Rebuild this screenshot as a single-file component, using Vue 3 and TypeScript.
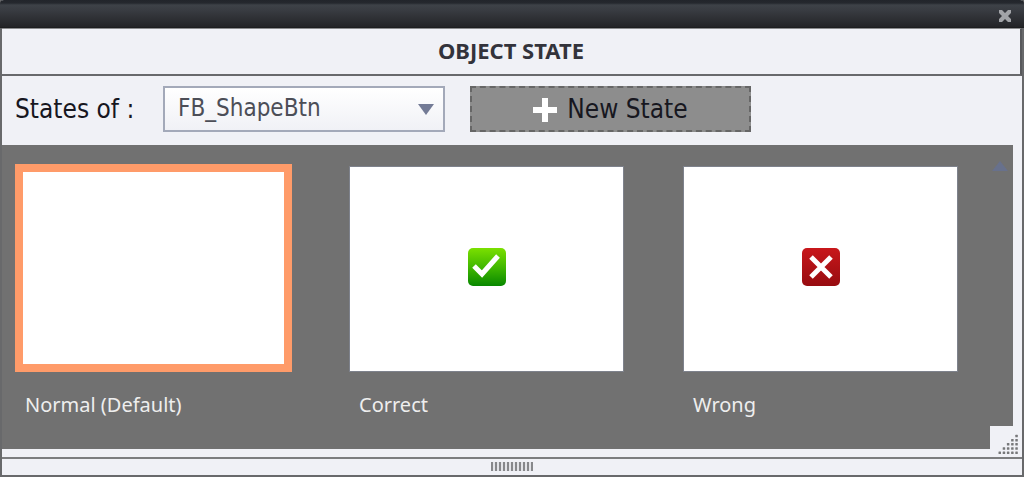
<script setup lang="ts">
import { ref } from 'vue'

interface ObjectState {
  id: string
  label: string
  icon?: 'correct' | 'wrong'
}

const states: ObjectState[] = [
  { id: 'normal', label: 'Normal (Default)' },
  { id: 'correct', label: 'Correct', icon: 'correct' },
  { id: 'wrong', label: 'Wrong', icon: 'wrong' },
]
const selected = ref('normal')
const target = ref('FB_ShapeBtn')
</script>

<template>
  <section class="panel" aria-labelledby="panel-title">
    <div class="titlebar">
      <button class="close" type="button" aria-label="Close">
        <svg viewBox="0 0 14 14" width="14" height="14">
          <path d="M1 1H4L7 4L10 1H13V4L10 7L13 10V13H10L7 10L4 13H1V10L4 7L1 4Z" fill="#a2a4a8" />
        </svg>
      </button>
    </div>
    <header class="heading"><h1 id="panel-title">OBJECT STATE</h1></header>
    <div class="toolbar">
      <label for="object-select">States of :</label>
      <div class="select-wrap">
        <select id="object-select" v-model="target">
          <option>FB_ShapeBtn</option>
        </select>
        <svg class="arrow" viewBox="0 0 16 11" width="16" height="11" aria-hidden="true">
          <path d="M0 0H16L8 11Z" fill="#737b96" />
        </svg>
      </div>
      <button class="new-state" type="button">
        <svg viewBox="0 0 24 24" width="24" height="24" aria-hidden="true">
          <path d="M9 0H15V9H24V15H15V24H9V15H0V9H9Z" fill="#fff" />
        </svg>
        <span>New State</span>
      </button>
    </div>
    <main class="stage">
      <div class="states">
        <button
          v-for="s in states"
          :key="s.id"
          class="state"
          :class="{ selected: selected === s.id }"
          type="button"
          :aria-pressed="selected === s.id"
          @click="selected = s.id"
        >
          <span class="thumb">
            <svg v-if="s.icon === 'correct'" viewBox="0 0 40 40" width="40" height="40" aria-hidden="true">
              <defs>
                <linearGradient id="green" x1="0" y1="0" x2="0" y2="1">
                  <stop offset="0" stop-color="#7be000" />
                  <stop offset="0.5" stop-color="#42b800" />
                  <stop offset="1" stop-color="#088800" />
                </linearGradient>
              </defs>
              <rect x="1" y="1" width="38" height="38" rx="5" fill="url(#green)" />
              <path d="M7 19L15 27L31 9" fill="none" stroke="#fff" stroke-width="5" />
            </svg>
            <svg v-if="s.icon === 'wrong'" viewBox="0 0 40 40" width="40" height="40" aria-hidden="true">
              <defs>
                <linearGradient id="red" x1="0" y1="0" x2="0" y2="1">
                  <stop offset="0" stop-color="#c8171b" />
                  <stop offset="1" stop-color="#970c10" />
                </linearGradient>
              </defs>
              <rect x="1" y="1" width="38" height="38" rx="5" fill="url(#red)" />
              <path d="M10 10L30 30M30 10L10 30" fill="none" stroke="#fff" stroke-width="5" />
            </svg>
          </span>
          <span class="caption">{{ s.label }}</span>
        </button>
      </div>
      <svg class="scroll-up" viewBox="0 0 16 10" width="16" height="10" aria-hidden="true">
        <path d="M0 10L8 0L16 10Z" fill="#68718c" />
      </svg>
      <svg class="resize" viewBox="0 0 32 31" width="32" height="31" aria-hidden="true">
        <rect width="32" height="31" fill="#f0f1f6" />
        <g fill="#77787a">
          <template v-for="row in 5" :key="row">
            <rect
              v-for="col in row"
              :key="col"
              :x="29.5 - col * 4.2"
              :y="4.5 + row * 4.2"
              width="2.5"
              height="2.5"
              rx="0.5"
            />
          </template>
        </g>
      </svg>
    </main>
    <footer class="footer"><span class="grip" /></footer>
  </section>
</template>

<style scoped>
.panel {
  box-sizing: border-box;
  border: 2px solid #68696b;
  border-top: 0;
  background: #f0f1f6;
  color: #17171f;
  font-family: "DejaVu Sans Condensed", "DejaVu Sans", "Noto Sans", sans-serif;
}
button {
  font: inherit;
  padding: 0;
  border: 0;
  background: none;
  cursor: pointer;
}
svg {
  display: block;
}
.titlebar {
  display: flex;
  align-items: center;
  justify-content: flex-end;
  height: 28px;
  margin: 0 -2px;
  padding: 4px 12px 0 0;
  box-sizing: border-box;
  border-bottom: 1px solid #1d1e20;
  border-radius: 4px 4px 0 0;
  background: linear-gradient(#22252b 0, #25282e 3px, #3e4248 5px, #393c42 10px, #232427 27px);
}
.heading {
  display: flex;
  align-items: center;
  justify-content: center;
  height: 48px;
  padding-bottom: 4px;
  box-sizing: border-box;
  border-top: 1px solid #8a8b8d;
  border-right: 2px solid #58595c;
  border-bottom: 2px solid #68696c;
}
h1 {
  margin: 0;
  font: 700 22px/24px "Noto Sans", sans-serif;
  color: #33333b;
}
.toolbar {
  display: flex;
  align-items: center;
  height: 69px;
  padding: 0 13px 4px;
  box-sizing: border-box;
}
.toolbar label {
  width: 148px;
  font-size: 26px;
  line-height: 32px;
}
.select-wrap {
  position: relative;
  width: 282px;
}
select {
  display: block;
  appearance: none;
  width: 100%;
  height: 46px;
  padding: 0 40px 2px 13px;
  border: 2px solid #a3a9b9;
  border-radius: 0;
  background: linear-gradient(#fff, #f0f1f6);
  color: #4c4e57;
  font: 24px/32px "DejaVu Sans Condensed", "DejaVu Sans", sans-serif;
}
.arrow {
  position: absolute;
  right: 11px;
  top: 18px;
  pointer-events: none;
}
.new-state {
  display: flex;
  align-items: center;
  justify-content: center;
  gap: 10px;
  width: 281px;
  height: 46px;
  margin-left: 25px;
  border: 2px dashed #666;
  background: #8d8d8d;
  color: #17171f;
  font-size: 26px;
  line-height: 32px;
}
.new-state svg {
  margin-top: 3px;
}
.stage {
  position: relative;
  margin-right: 9px;
  padding: 19px 53px 31px 13px;
  background: #717171;
}
.states {
  display: grid;
  grid-template-columns: repeat(3, 1fr);
  gap: 57px;
}
.state {
  display: block;
  text-align: left;
}
.thumb {
  display: flex;
  align-items: center;
  justify-content: center;
  height: 206px;
  margin: 1px 2px 1px 0;
  box-sizing: border-box;
  border: 1px solid #7e828c;
  background: #fff;
}
.thumb svg {
  margin-bottom: 3px;
}
.selected .thumb {
  height: 208px;
  margin: 0;
  border: 8px solid #ff9b69;
}
.caption {
  display: block;
  margin: 20px 10px 0;
  color: #eee;
  font: 20px/26px "Noto Sans", sans-serif;
  white-space: nowrap;
}
.scroll-up {
  position: absolute;
  top: 16px;
  right: 5px;
}
.resize {
  position: absolute;
  right: -9px;
  bottom: -8px;
}
.footer {
  display: flex;
  align-items: center;
  justify-content: center;
  height: 18px;
  margin-top: 8px;
  padding-bottom: 2px;
  box-sizing: border-box;
  border-top: 2px solid #7c7d7f;
}
.grip {
  width: 42px;
  height: 9px;
  background: repeating-linear-gradient(90deg, #87888b 0, #87888b 2px, #e3e4e8 2px, #e3e4e8 4px);
}
</style>

<style>
body {
  margin: 0;
  background: #747476;
}
</style>
